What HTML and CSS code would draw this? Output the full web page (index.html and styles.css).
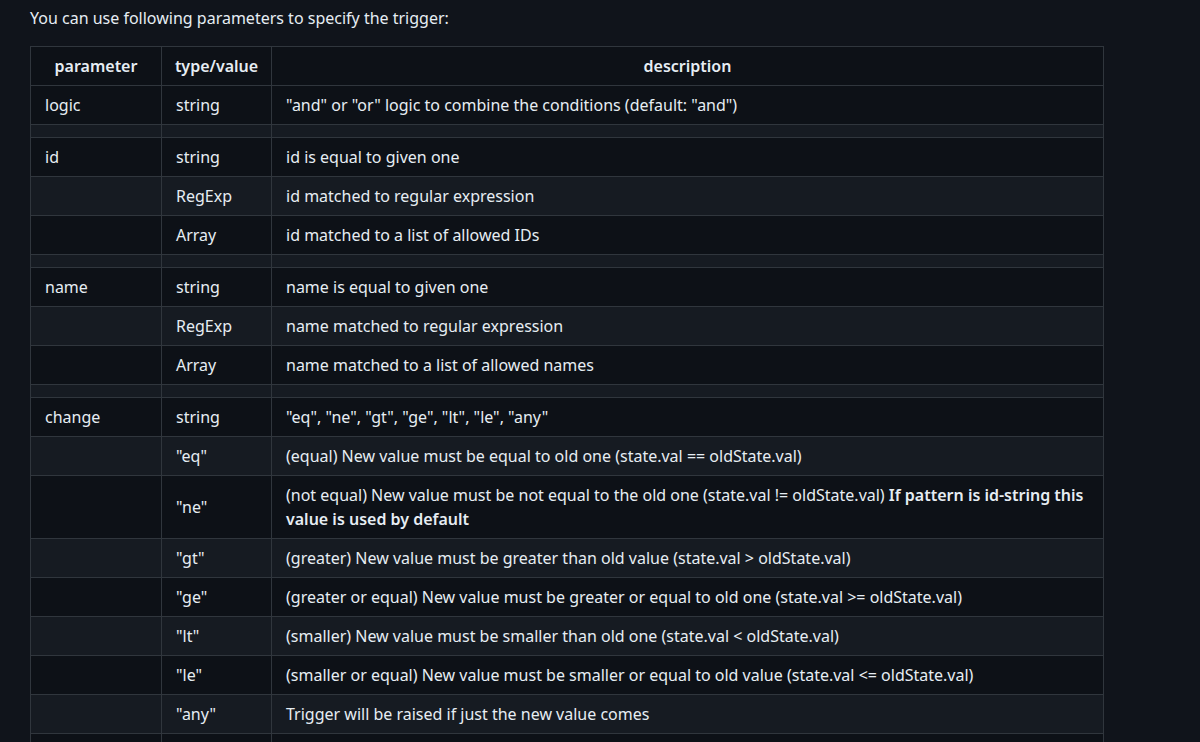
FILE: index.html
```html
<!DOCTYPE html>
<html>
<head>
<meta charset="utf-8">
<link rel="stylesheet" href="styles.css">
</head>
<body>
<div class="markdown">
<p class="intro">You can use following parameters to specify the trigger:</p>
<table class="params">
<thead>
<tr><th class="c1">parameter</th><th class="c2">type/value</th><th class="c3">description</th></tr>
</thead>
<tbody>
<tr><td>logic</td><td>string</td><td>"and" or "or" logic to combine the conditions (default: "and")</td></tr>
<tr class="gap"><td></td><td></td><td></td></tr>
<tr><td>id</td><td>string</td><td>id is equal to given one</td></tr>
<tr><td></td><td>RegExp</td><td>id matched to regular expression</td></tr>
<tr><td></td><td>Array</td><td>id matched to a list of allowed IDs</td></tr>
<tr class="gap"><td></td><td></td><td></td></tr>
<tr><td>name</td><td>string</td><td>name is equal to given one</td></tr>
<tr><td></td><td>RegExp</td><td>name matched to regular expression</td></tr>
<tr><td></td><td>Array</td><td>name matched to a list of allowed names</td></tr>
<tr class="gap"><td></td><td></td><td></td></tr>
<tr><td>change</td><td>string</td><td>"eq", "ne", "gt", "ge", "lt", "le", "any"</td></tr>
<tr><td></td><td>"eq"</td><td>(equal) New value must be equal to old one (state.val == oldState.val)</td></tr>
<tr><td></td><td>"ne"</td><td>(not equal) New value must be not equal to the old one (state.val != oldState.val) <strong>If pattern is id-string this</strong> <strong>value is used by default</strong></td></tr>
<tr><td></td><td>"gt"</td><td>(greater) New value must be greater than old value (state.val &gt; oldState.val)</td></tr>
<tr><td></td><td>"ge"</td><td>(greater or equal) New value must be greater or equal to old one (state.val &gt;= oldState.val)</td></tr>
<tr><td></td><td>"lt"</td><td>(smaller) New value must be smaller than old one (state.val &lt; oldState.val)</td></tr>
<tr><td></td><td>"le"</td><td>(smaller or equal) New value must be smaller or equal to old value (state.val &lt;= oldState.val)</td></tr>
<tr><td></td><td>"any"</td><td>Trigger will be raised if just the new value comes</td></tr>
<tr><td></td><td>&nbsp;</td><td>&nbsp;</td></tr>
</tbody>
</table>
</div>
</body>
</html>
```

FILE: styles.css
```css
html, body {
  margin: 0;
  padding: 0;
  background: #10141b;
}
body {
  font-family: "Noto Sans", "Open Sans", sans-serif;
  font-size: 16px;
  line-height: 24px;
  color: #e6edf3;
  overflow: hidden;
  height: 742px;
}
.markdown {
  padding: 0 0 0 30px;
}
.intro {
  margin: 6px 0 16px 0;
}
.params {
  border-collapse: collapse;
  border-spacing: 0;
  table-layout: fixed;
  width: 1074px;
}
.params th,
.params td {
  border: 1px solid #30363d;
  padding: 7px 14px 7px 14px;
  text-align: left;
  vertical-align: middle;
}
.params th {
  font-weight: 600;
  text-align: center;
  white-space: nowrap;
}
.params tr {
  background: #0d1117;
}
.params tbody tr:nth-child(2n) {
  background: #161b22;
}
.params .c1 {
  width: 102px;
}
.params .c2 {
  width: 89px;
  padding-left: 10px;
  padding-right: 10px;
}
.params tr.gap td {
  padding: 0;
  height: 12px;
}
.params strong {
  font-weight: 600;
}
```
